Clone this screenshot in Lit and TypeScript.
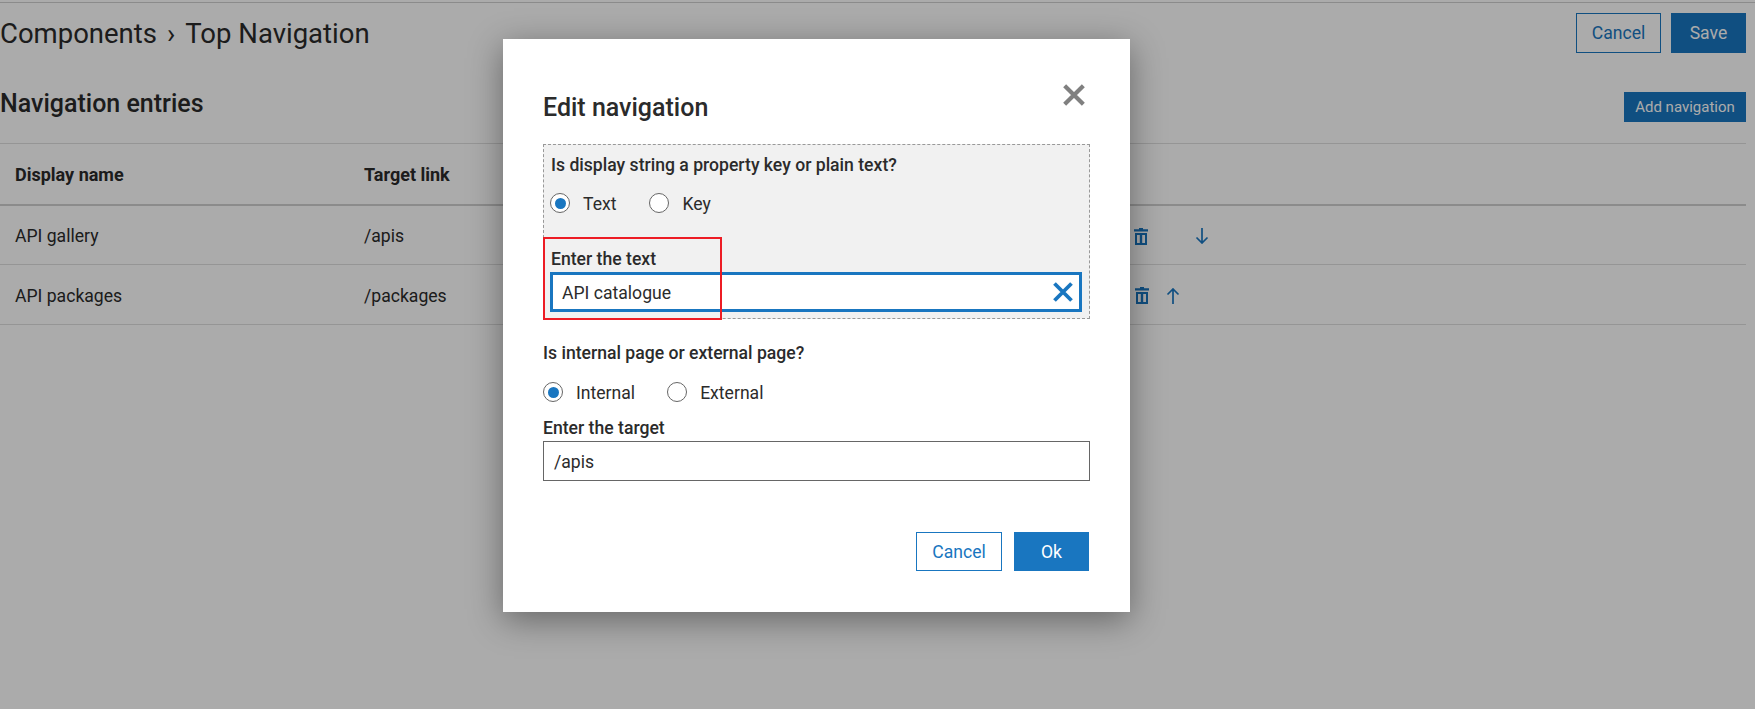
import { LitElement, html, css } from 'lit';
import { customElement } from 'lit/decorators.js';

const trashIcon = html`<svg class="trash" width="14" height="17" viewBox="0 0 14 17">
  <path d="M5 0h4v1.200h5v2.300H0V1.200h5z" fill="currentColor"></path>
  <path fill-rule="evenodd" d="M1 5h12v12H1zM3 7v8h2.800V7zM8.200 7v8H11V7z" fill="currentColor"></path>
</svg>`;

const arrowDown = html`<svg width="14" height="16" viewBox="0 0 14 16" fill="none" stroke="currentColor" stroke-width="1.700">
  <path d="M7 0v15M1.500 9.500L7 15l5.500-5.500"></path>
</svg>`;

const arrowUp = html`<svg width="14" height="16" viewBox="0 0 14 16" fill="none" stroke="currentColor" stroke-width="1.700">
  <path d="M7 16V1M1.500 6.500L7 1l5.500 5.500"></path>
</svg>`;

const crossIcon = (size: number, cls: string) => html`<svg class=${cls} width=${size} height=${size} viewBox="0 0 20 20" fill="none" stroke="currentColor" stroke-width="3.800">
  <path d="M1.500 1.500l17 17M18.500 1.500l-17 17"></path>
</svg>`;

@customElement('app-root')
export class AppRoot extends LitElement {
  static styles = css`
    :host {
      display: block;
      position: relative;
      height: 709px;
      overflow: hidden;
      background: #fff;
      color: #2b2b2b;
      font-family: Roboto, 'Liberation Sans', sans-serif;
      font-size: 17.6px;
    }
    .page {
      padding: 2px 9px 0 0;
    }
    .top_rule {
      height: 1px;
      margin-right: -9px;
      background: #cfcfcf;
    }
    .page_head {
      display: flex;
      justify-content: space-between;
      align-items: center;
      padding-top: 10px;
    }
    .crumbs {
      font-size: 27.5px;
      line-height: 39px;
      display: flex;
      align-items: center;
      gap: 10px;
      padding-top: 1px;
    }
    .head_actions {
      display: flex;
      gap: 10px;
    }
    .btn {
      box-sizing: border-box;
      display: flex;
      align-items: center;
      justify-content: center;
      height: 40px;
      border: 1px solid #1976c0;
      color: #1976c0;
      background: #fff;
    }
    .btn.primary {
      background: #1976c0;
      color: #fff;
    }
    .head_actions .btn {
      width: 85px;
    }
    .head_actions .btn.primary {
      width: 75px;
    }
    .section_head {
      display: flex;
      justify-content: space-between;
      align-items: center;
      margin-top: 39px;
      height: 30px;
      margin-bottom: 21px;
    }
    .section_head h2 {
      margin: 0 0 8px;
      font-size: 25px;
      font-weight: 500;
    }
    .add_btn {
      height: 30px;
      width: 122px;
      font-size: 15px;
    }
    .row {
      display: grid;
      grid-template-columns: 364px 770px 1fr;
      border-top: 1px solid #dedede;
      height: 59px;
      align-items: center;
    }
    .row > :first-child {
      padding-left: 15px;
    }
    .row.body > div {
      padding-top: 2px;
    }
    .row.header {
      height: 60px;
      font-size: 18px;
      font-weight: 700;
      border-bottom: 2px solid #cfcfcf;
    }
    .row.header + .row {
      border-top: 0;
      height: 58px;
    }
    .row.last {
      border-bottom: 1px solid #dedede;
    }
    .actions {
      display: flex;
      align-items: center;
      color: #1976c0;
    }
    .gap_wide {
      width: 47px;
    }
    .gap_narrow {
      width: 17px;
    }
    .row.last .actions {
      padding-left: 1px;
    }
    .trash {
      display: block;
    }
    .overlay {
      position: absolute;
      inset: 0;
      background: rgba(0, 0, 0, 0.33);
    }
    .modal {
      box-sizing: border-box;
      position: absolute;
      left: 503px;
      top: 39px;
      width: 627px;
      height: 573px;
      padding: 55px 40px 0;
      background: #fff;
      box-shadow: 0 8px 32px rgba(0, 0, 0, 0.4);
    }
    .modal_head {
      display: flex;
      justify-content: space-between;
      align-items: flex-start;
      margin-bottom: 22px;
    }
    .modal_head h3 {
      margin: 0;
      font-size: 25px;
      font-weight: 500;
      line-height: 28px;
    }
    .close {
      margin: -10px 5px 0 0;
      color: #808080;
    }
    .dashed {
      position: relative;
      padding: 10px 7px 6px 6px;
      background: #f1f1f1;
      border: 1px dashed #999;
    }
    .question,
    .field_label {
      font-weight: 500;
      line-height: 20px;
    }
    .dashed .question,
    .dashed .field_label {
      margin-left: 1px;
    }
    .radios {
      display: flex;
      gap: 33px;
      margin-top: 18px;
    }
    .radios.tight {
      gap: 32px;
      margin-top: 19px;
    }
    .radio {
      display: flex;
      align-items: center;
      gap: 13px;
      height: 20px;
      line-height: 20px;
    }
    .radio_label {
      padding-top: 2px;
    }
    .dot {
      box-sizing: border-box;
      width: 20px;
      height: 20px;
      border: 1px solid #666;
      border-radius: 50%;
      background: #fff;
      display: flex;
      align-items: center;
      justify-content: center;
    }
    .dot.on::after {
      content: '';
      width: 11px;
      height: 11px;
      border-radius: 50%;
      background: #1976c0;
    }
    .field_label {
      margin-top: 16px;
    }
    .dashed .field_label {
      margin-top: 36px;
    }
    .input {
      box-sizing: border-box;
      display: flex;
      align-items: center;
      justify-content: space-between;
      height: 40px;
      margin-top: 3px;
      padding: 0 10px;
      background: #fff;
      border: 1px solid #666;
    }
    .input.focused {
      border: 3px solid #1976c0;
      padding: 0 6px 0 9px;
    }
    .input_value {
      padding-top: 2px;
    }
    .clear {
      color: #1976c0;
      display: block;
    }
    .callout {
      box-sizing: border-box;
      position: absolute;
      left: -1px;
      top: 92px;
      width: 179px;
      height: 83px;
      border: 2px solid #ed1c24;
      pointer-events: none;
    }
    .question.second {
      margin-top: 24px;
    }
    .modal_actions {
      display: flex;
      justify-content: flex-end;
      gap: 12px;
      margin: 51px 1px 0 0;
    }
    .modal_actions .btn {
      height: 39px;
      width: 86px;
    }
    .modal_actions .btn.primary {
      width: 75px;
    }
  `;

  render() {
    return html`
      <div class="page">
        <div class="top_rule"></div>
        <div class="page_head">
          <div class="crumbs"><span>Components</span><span>›</span><span>Top Navigation</span></div>
          <div class="head_actions">
            <div class="btn">Cancel</div>
            <div class="btn primary">Save</div>
          </div>
        </div>
        <div class="section_head">
          <h2>Navigation entries</h2>
          <div class="btn primary add_btn">Add navigation</div>
        </div>
        <div class="row header"><div>Display name</div><div>Target link</div><div></div></div>
        <div class="row body">
          <div>API gallery</div>
          <div>/apis</div>
          <div class="actions">${trashIcon}<span class="gap_wide"></span>${arrowDown}</div>
        </div>
        <div class="row body last">
          <div>API packages</div>
          <div>/packages</div>
          <div class="actions">${trashIcon}<span class="gap_narrow"></span>${arrowUp}</div>
        </div>
      </div>
      <div class="overlay"></div>
      <div class="modal">
        <div class="modal_head">
          <h3>Edit navigation</h3>
          ${crossIcon(22, 'close')}
        </div>
        <div class="dashed">
          <div class="question">Is display string a property key or plain text?</div>
          <div class="radios">
            <div class="radio"><span class="dot on"></span><span class="radio_label">Text</span></div>
            <div class="radio"><span class="dot"></span><span class="radio_label">Key</span></div>
          </div>
          <div class="field_label">Enter the text</div>
          <div class="input focused"><span class="input_value">API catalogue</span>${crossIcon(20, 'clear')}</div>
          <div class="callout"></div>
        </div>
        <div class="question second">Is internal page or external page?</div>
        <div class="radios tight">
          <div class="radio"><span class="dot on"></span><span class="radio_label">Internal</span></div>
          <div class="radio"><span class="dot"></span><span class="radio_label">External</span></div>
        </div>
        <div class="field_label">Enter the target</div>
        <div class="input"><span class="input_value">/apis</span></div>
        <div class="modal_actions">
          <div class="btn">Cancel</div>
          <div class="btn primary">Ok</div>
        </div>
      </div>
    `;
  }
}
